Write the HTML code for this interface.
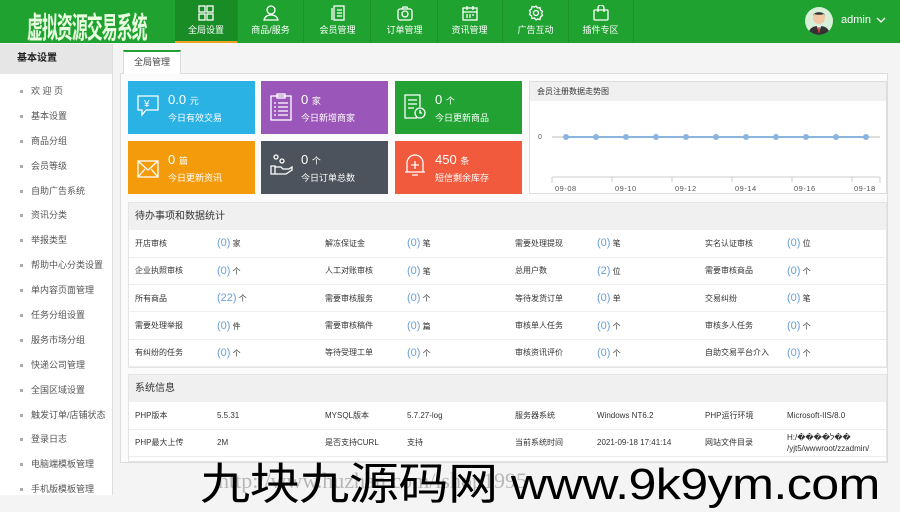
<!DOCTYPE html>
<html><head><meta charset="utf-8"><style>
*{margin:0;padding:0;box-sizing:border-box}
body{width:900px;height:509px;overflow:hidden;background:#f4f4f4;font-family:"Liberation Sans","Noto Sans CJK SC",sans-serif;font-size:9px;color:#333;position:relative}
.hd{position:absolute;left:0;top:0;width:900px;height:43px;background:#20a231}
.logo{position:absolute;left:27px;top:5px;font-size:18px;font-weight:bold;color:#e8ffe0;letter-spacing:-1px;font-family:"WenQuanYi Zen Hei","Noto Sans CJK SC",sans-serif;transform:scale(0.88,1.65);transform-origin:0 0;white-space:nowrap}
.nav{position:absolute;top:0;height:43px;width:66px;color:#fff;text-align:center;font-size:9px;border-right:1px solid #1b9229}
.nav svg{display:block;margin:5px auto 2px}
.nav.on{background:#198c25;border-bottom:2px solid #f0a020}
.user{position:absolute;left:805px;top:7px;width:28px;height:28px;border-radius:50%;background:#d8efd8;overflow:hidden}
.side{position:absolute;left:0;top:44px;width:113px;height:451px;background:#fff;border-right:1px solid #ddd}
.side .t{height:30px;background:#e6e6e6;font-weight:bold;font-size:10px;line-height:30px;padding-left:17px;color:#222}
.side div.i{height:24.9px;line-height:25px;padding-left:31px;color:#555;position:relative}
.side div.i:before{content:"";position:absolute;left:20px;top:11px;width:3px;height:3px;background:#aaa}
.tab{position:absolute;left:123px;top:50px;width:58px;height:24px;background:#fff;border:1px solid #ddd;border-top:2px solid #20a231;border-bottom:none;line-height:21px;text-align:center;color:#444}
.panel{position:absolute;left:120px;top:73px;width:768px;height:390px;background:#fbfbfb;border:1px solid #ddd}
.card{position:absolute;width:127px;height:53px;color:#fff}
.card .n{position:absolute;left:40px;top:11px;font-size:13px}
.card .n small{font-size:9px}
.card .l{position:absolute;left:40px;top:30px;font-size:9px}
.card svg{position:absolute;left:9px;top:13px}
.chart{position:absolute;left:529px;top:81px;width:358px;height:113px;background:#fff;border:1px solid #ddd}
.chart .h{height:19px;background:#f0f0f0;line-height:19px;padding-left:7px;font-size:8px}
.sec{position:absolute;left:128px;width:759px;background:#fff;border:1px solid #e4e4e4}
.sec .h{height:27px;background:#f0f0f0;line-height:27px;padding-left:6px;font-size:10px}
table{border-collapse:collapse;width:100%}
td{height:27.3px;border-bottom:1px solid #eee;padding-left:6px;font-size:8px;color:#333}
td.v b{color:#6aa0d8;font-weight:normal;font-size:11px}
.wm{position:absolute;left:200px;top:448px;font-size:44px;color:#000;white-space:nowrap;font-family:"Liberation Sans","Noto Sans CJK SC",sans-serif;letter-spacing:-0.5px;transform:scaleX(1.14);transform-origin:0 0}
.wm2{position:absolute;left:218px;top:468px;font-size:22px;color:rgba(0,0,0,0.25);white-space:nowrap;font-family:"Liberation Serif",serif}
</style></head><body>
<div class="hd">
<div class="logo">虚拟资源交易系统</div>
<div class="nav on" style="left:175px;width:63px"><svg width="16" height="16" viewBox="0 0 16 16" fill="none" stroke="#fff" stroke-width="1.3"><rect x="1" y="1" width="6" height="6"/><rect x="9" y="1" width="6" height="6"/><rect x="1" y="9" width="6" height="6"/><rect x="9" y="9" width="6" height="6"/></svg>全局设置</div>
<div class="nav" style="left:238px"><svg width="16" height="16" viewBox="0 0 16 16" fill="none" stroke="#fff" stroke-width="1.3"><circle cx="8" cy="5" r="4"/><path d="M1 15c1-4 4-5 7-5s6 1 7 5z"/></svg>商品/服务</div>
<div class="nav" style="left:305px"><svg width="16" height="16" viewBox="0 0 16 16" fill="none" stroke="#fff" stroke-width="1.3"><rect x="4" y="1" width="10" height="14"/><path d="M2 3v12M7 5h5M7 8h5M7 11h5"/></svg>会员管理</div>
<div class="nav" style="left:372px"><svg width="16" height="16" viewBox="0 0 16 16" fill="none" stroke="#fff" stroke-width="1.3"><rect x="1" y="4" width="14" height="11" rx="2"/><circle cx="8" cy="9" r="3"/><path d="M5 4l1-2h4l1 2"/></svg>订单管理</div>
<div class="nav" style="left:437px"><svg width="16" height="16" viewBox="0 0 16 16" fill="none" stroke="#fff" stroke-width="1.3"><rect x="1" y="3" width="14" height="12"/><path d="M1 7h14M5 1v4M11 1v4M4 10h2M7 10h2M10 10h2M4 12h2M7 12h2"/></svg>资讯管理</div>
<div class="nav" style="left:503px"><svg width="16" height="16" viewBox="0 0 16 16" fill="none" stroke="#fff" stroke-width="1.3"><circle cx="8" cy="8" r="2.5"/><path d="M8 1l1.5 2 2.5-.5.5 2.5 2 1.5-1 2 1 2-2 1.5-.5 2.5-2.5-.5L8 15l-1.5-2-2.5.5-.5-2.5-2-1.5 1-2-1-2 2-1.5.5-2.5 2.5.5z"/></svg>广告互动</div>
<div class="nav" style="left:568px"><svg width="16" height="16" viewBox="0 0 16 16" fill="none" stroke="#fff" stroke-width="1.3"><rect x="1" y="5" width="14" height="10" rx="1"/><path d="M5 7V3a3 3 0 0 1 6 0v4"/></svg>插件专区</div>
<div class="user"><svg width="28" height="28" viewBox="0 0 28 28"><circle cx="14" cy="11" r="6" fill="#f2c9a5"/><path d="M8 9c0-5 12-5 12 0l-1-2c-3 1-7 1-10 0z" fill="#333"/><path d="M3 28c1-7 5-9 11-9s10 2 11 9z" fill="#333"/><path d="M12 19l2 7 2-7z" fill="#fff"/><path d="M13.3 20h1.4l.3 5-1 1-1-1z" fill="#c33"/></svg></div>
<div style="position:absolute;left:841px;top:14px;color:#fff;font-size:11px">admin</div>
<svg style="position:absolute;left:876px;top:17px" width="10" height="7" viewBox="0 0 10 7"><path d="M1 1l4 4 4-4" stroke="#fff" fill="none" stroke-width="1.3"/></svg>
</div>
<div class="side"><div class="t">基本设置</div><div style="height:5px"></div>
<div class="i">欢 迎 页</div><div class="i">基本设置</div><div class="i">商品分组</div><div class="i">会员等级</div><div class="i">自助广告系统</div><div class="i">资讯分类</div><div class="i">举报类型</div><div class="i">帮助中心分类设置</div><div class="i">单内容页面管理</div><div class="i">任务分组设置</div><div class="i">服务市场分组</div><div class="i">快递公司管理</div><div class="i">全国区域设置</div><div class="i">触发订单/店铺状态</div><div class="i">登录日志</div><div class="i">电脑端模板管理</div><div class="i">手机版模板管理</div>
</div>
<div class="panel"></div>
<div class="tab">全局管理</div>
<div class="card" style="left:128px;top:81px;background:#2bb2e4"><svg width="22" height="24" viewBox="0 0 22 24" fill="none" stroke="#fff" stroke-width="1.3"><path d="M1 2h20v14H9l-4 5v-5H1z"/><text x="7" y="13" fill="#fff" stroke="none" font-size="10">¥</text></svg><div class="n">0.0 <small>元</small></div><div class="l">今日有效交易</div></div>
<div class="card" style="left:261px;top:81px;background:#9a56b8"><svg width="22" height="28" viewBox="0 0 22 28" fill="none" stroke="#fff" stroke-width="1.3" style="top:12px"><rect x="1" y="3" width="20" height="24"/><rect x="7" y="1" width="8" height="4"/><path d="M4 10h2M8 10h10M4 14h2M8 14h10M4 18h2M8 18h10M4 22h2M8 22h10"/></svg><div class="n">0 <small>家</small></div><div class="l">今日新增商家</div></div>
<div class="card" style="left:395px;top:81px;background:#21a233"><svg width="22" height="26" viewBox="0 0 22 26" fill="none" stroke="#fff" stroke-width="1.3"><path d="M13 24H1V1h15v12"/><path d="M4 6h9M4 10h9M4 14h6"/><circle cx="16" cy="19" r="5"/><path d="M16 16v3h2"/></svg><div class="n">0 <small>个</small></div><div class="l">今日更新商品</div></div>
<div class="card" style="left:128px;top:141px;background:#f49b0b"><svg width="22" height="18" viewBox="0 0 22 18" fill="none" stroke="#fff" stroke-width="1.3" style="top:19px"><rect x="1" y="1" width="20" height="16"/><path d="M1 1l10 9 10-9M1 17l7-8M21 17l-7-8"/></svg><div class="n">0 <small>篇</small></div><div class="l">今日更新资讯</div></div>
<div class="card" style="left:261px;top:141px;background:#4c535c"><svg width="24" height="22" viewBox="0 0 24 22" fill="none" stroke="#fff" stroke-width="1.3"><circle cx="6" cy="3" r="2"/><circle cx="12" cy="7" r="2"/><path d="M1 12h4v8H1zM5 13h6l2 2h6l3-2v3l-6 4H5"/></svg><div class="n">0 <small>个</small></div><div class="l">今日订单总数</div></div>
<div class="card" style="left:395px;top:141px;background:#f25a3e"><svg width="22" height="28" viewBox="0 0 22 28" fill="none" stroke="#fff" stroke-width="1.3" style="top:11px"><path d="M3 20V11a8 8 0 0 1 16 0v9M1 20h20"/><path d="M11 9v8M7 13h8M8 23h6"/></svg><div class="n">450 <small>条</small></div><div class="l">短信剩余库存</div></div>
<div class="chart"><div class="h">会员注册数据走势图</div>
<svg width="358" height="93" viewBox="0 0 358 93" style="display:block"><text x="8" y="38" font-size="7" fill="#555">0</text><line x1="22" y1="36" x2="350" y2="36" stroke="#bbb"/><line x1="36" y1="36" x2="336" y2="36" stroke="#8bb4e0" stroke-width="2"/>
<g fill="#8bb4e0"><circle cx="36" cy="36" r="3"/><circle cx="66" cy="36" r="3"/><circle cx="96" cy="36" r="3"/><circle cx="126" cy="36" r="3"/><circle cx="156" cy="36" r="3"/><circle cx="186" cy="36" r="3"/><circle cx="216" cy="36" r="3"/><circle cx="246" cy="36" r="3"/><circle cx="276" cy="36" r="3"/><circle cx="306" cy="36" r="3"/><circle cx="336" cy="36" r="3"/></g>
<line x1="22" y1="76" x2="350" y2="76" stroke="#ccc"/>
<g stroke="#ccc"><line x1="22" y1="76" x2="22" y2="82"/><line x1="82" y1="76" x2="82" y2="81"/><line x1="142" y1="76" x2="142" y2="81"/><line x1="202" y1="76" x2="202" y2="81"/><line x1="262" y1="76" x2="262" y2="81"/><line x1="322" y1="76" x2="322" y2="81"/><line x1="350" y1="76" x2="350" y2="82"/></g>
<g font-size="7.5" fill="#555" letter-spacing=".5"><text x="25" y="90">09-08</text><text x="85" y="90">09-10</text><text x="145" y="90">09-12</text><text x="205" y="90">09-14</text><text x="264" y="90">09-16</text><text x="324" y="90">09-18</text></g></svg></div>
<div class="sec" style="top:202px"><div class="h">待办事项和数据统计</div>
<table><colgroup><col style="width:82px"><col style="width:108px"><col style="width:82px"><col style="width:108px"><col style="width:82px"><col style="width:108px"><col style="width:82px"><col></colgroup>
<tr><td>开店审核</td><td class="v"><b>(0)</b> 家</td><td>解冻保证金</td><td class="v"><b>(0)</b> 笔</td><td>需要处理提现</td><td class="v"><b>(0)</b> 笔</td><td>实名认证审核</td><td class="v"><b>(0)</b> 位</td></tr>
<tr><td>企业执照审核</td><td class="v"><b>(0)</b> 个</td><td>人工对账审核</td><td class="v"><b>(0)</b> 笔</td><td>总用户数</td><td class="v"><b>(2)</b> 位</td><td>需要审核商品</td><td class="v"><b>(0)</b> 个</td></tr>
<tr><td>所有商品</td><td class="v"><b>(22)</b> 个</td><td>需要审核服务</td><td class="v"><b>(0)</b> 个</td><td>等待发货订单</td><td class="v"><b>(0)</b> 单</td><td>交易纠纷</td><td class="v"><b>(0)</b> 笔</td></tr>
<tr><td>需要处理举报</td><td class="v"><b>(0)</b> 件</td><td>需要审核稿件</td><td class="v"><b>(0)</b> 篇</td><td>审核单人任务</td><td class="v"><b>(0)</b> 个</td><td>审核多人任务</td><td class="v"><b>(0)</b> 个</td></tr>
<tr><td>有纠纷的任务</td><td class="v"><b>(0)</b> 个</td><td>等待受理工单</td><td class="v"><b>(0)</b> 个</td><td>审核资讯评价</td><td class="v"><b>(0)</b> 个</td><td>自助交易平台介入</td><td class="v"><b>(0)</b> 个</td></tr>
</table></div>
<div class="sec" style="top:374px;height:88px"><div class="h">系统信息</div>
<table><colgroup><col style="width:82px"><col style="width:108px"><col style="width:82px"><col style="width:108px"><col style="width:82px"><col style="width:108px"><col style="width:82px"><col></colgroup>
<tr><td>PHP版本</td><td>5.5.31</td><td>MYSQL版本</td><td>5.7.27-log</td><td>服务器系统</td><td>Windows NT6.2</td><td>PHP运行环境</td><td>Microsoft-IIS/8.0</td></tr>
<tr><td>PHP最大上传</td><td>2M</td><td>是否支持CURL</td><td>支持</td><td>当前系统时间</td><td>2021-09-18 17:41:14</td><td>网站文件目录</td><td style="line-height:11px">H:/����ל��<br>/yjt5/wwwroot/zzadmin/</td></tr>
</table></div>
<div class="wm2">http://www.huzhan.com/ishop1995</div>
<div class="wm">九块九源码网 www.9k9ym.com</div>
</body></html>
